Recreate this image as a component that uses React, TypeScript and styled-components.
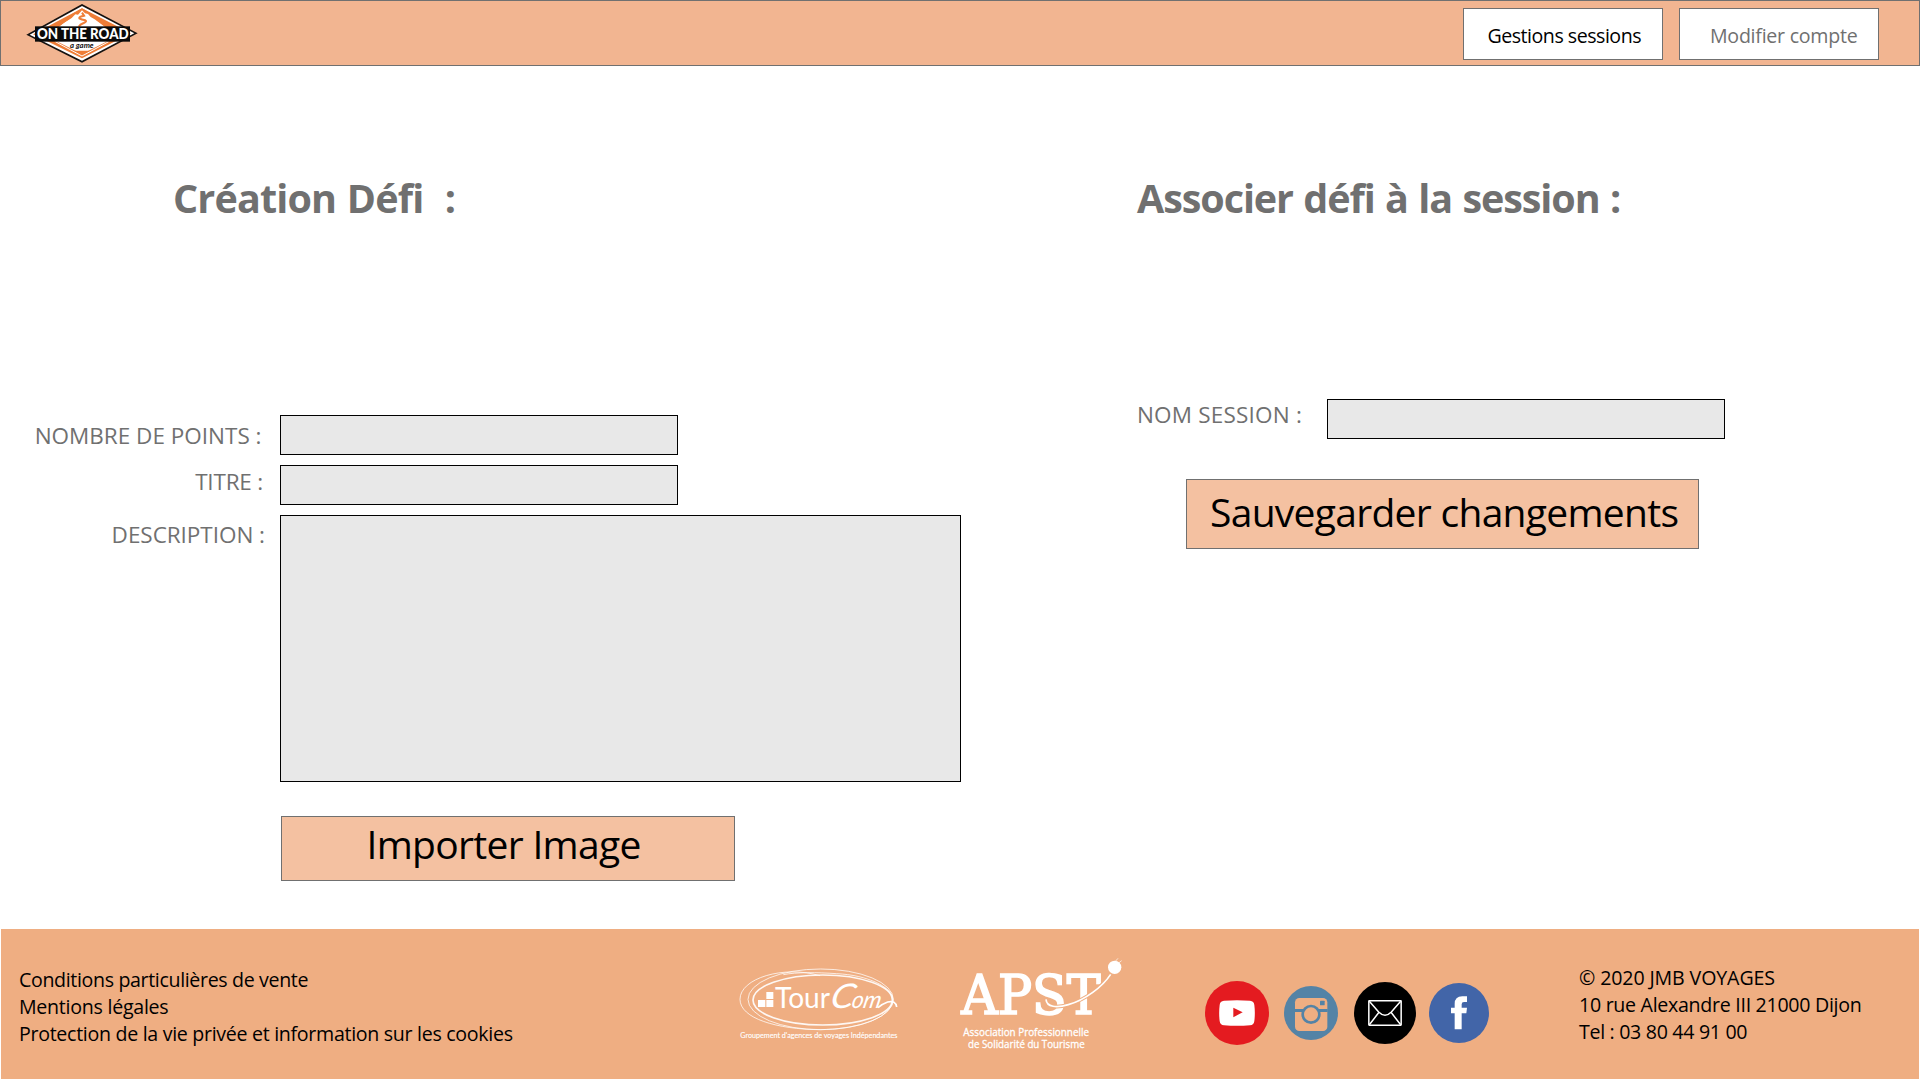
import React from "react";
import styled, { createGlobalStyle } from "styled-components";

const GlobalStyle = createGlobalStyle`
  *, *::before, *::after { box-sizing: border-box; }
  body {
    margin: 0;
    background: #ffffff;
    font-family: "Open Sans", "Noto Sans", sans-serif;
    color: #000000;
  }
`;

const Page = styled.div`
  width: 1920px;
  height: 1080px;
  display: flex;
  flex-direction: column;
  overflow: hidden;
`;

const Header = styled.header`
  height: 66px;
  flex: none;
  display: flex;
  justify-content: space-between;
  align-items: flex-start;
  background: #f2b591;
  border: 1px solid #707070;
`;

const BrandLogo = styled.svg`
  display: block;
  width: 139px;
  height: 64px;
`;

const Nav = styled.nav`
  display: flex;
  gap: 16px;
  padding: 7px 40px 0 0;
`;

const NavButton = styled.button<{ $indent: number; $muted?: boolean; $track: number }>`
  width: 200px;
  height: 52px;
  padding: 2px 0 0 ${(p) => p.$indent}px;
  border: 1px solid #707070;
  background: #ffffff;
  color: ${(p) => (p.$muted ? "#707070" : "#000000")};
  font-family: inherit;
  font-size: 19.6px;
  letter-spacing: ${(p) => p.$track}px;
  text-align: left;
  white-space: nowrap;
`;

const Main = styled.main`
  flex: 1;
  display: flex;
  align-items: flex-start;
`;

const Section = styled.section<{ $width: number }>`
  width: ${(p) => p.$width}px;
  display: flex;
  flex-direction: column;
  padding-top: 105px;
`;

const Title = styled.h1<{ $indent: number; $space: number; $track: number }>`
  margin: 0 0 ${(p) => p.$space}px ${(p) => p.$indent}px;
  font-size: 39.5px;
  font-weight: 700;
  line-height: 54px;
  letter-spacing: ${(p) => p.$track}px;
  word-spacing: 1.2px;
  color: #707070;
  white-space: pre;
`;

const Row = styled.div`
  display: flex;
  align-items: flex-start;
  margin-bottom: 10px;
`;

const Label = styled.label<{ $width: number; $drop: number; $gap: number; $track: number }>`
  width: ${(p) => p.$width}px;
  padding: ${(p) => p.$drop}px ${(p) => p.$gap}px 0 0;
  font-size: 22.5px;
  line-height: 30px;
  letter-spacing: ${(p) => p.$track}px;
  text-align: right;
  white-space: nowrap;
  color: #707070;
`;

const Input = styled.input`
  width: 398px;
  height: 40px;
  border: 1px solid #000000;
  border-radius: 0;
  background: #e8e8e8;
`;

const TextArea = styled.textarea`
  display: block;
  width: 681px;
  height: 267px;
  border: 1px solid #000000;
  border-radius: 0;
  background: #e8e8e8;
  resize: none;
`;

const ActionButton = styled.button<{
  $width: number;
  $height: number;
  $margin: string;
  $indent: number;
  $lift: number;
  $track: number;
}>`
  width: ${(p) => p.$width}px;
  height: ${(p) => p.$height}px;
  margin: ${(p) => p.$margin};
  padding: 0 0 ${(p) => p.$lift}px ${(p) => p.$indent}px;
  border: 1px solid #707070;
  background: #f4c1a1;
  color: #000000;
  font-family: inherit;
  font-size: 39px;
  line-height: 54px;
  letter-spacing: ${(p) => p.$track}px;
  text-align: left;
  white-space: nowrap;
`;

const Footer = styled.footer`
  flex: none;
  height: 150px;
  margin: 0 1px 1px;
  display: flex;
  align-items: flex-start;
  background: #efae82;
`;

const TextBlock = styled.div<{ $width: number; $top: number; $left: number }>`
  width: ${(p) => p.$width}px;
  padding: ${(p) => p.$top}px 0 0 ${(p) => p.$left}px;
`;

const FooterLine = styled.p<{ $track: number }>`
  margin: 0;
  font-size: 19.6px;
  line-height: 27px;
  letter-spacing: ${(p) => p.$track}px;
  white-space: nowrap;
`;

const PartnerLogo = styled.svg`
  display: block;
  flex: none;
  width: 200px;
  height: 120px;
  margin: 11px 20px 0 0;
`;

const Socials = styled.div`
  width: 374px;
  margin: 52px 0 0 45px;
  height: 64px;
  display: flex;
  align-items: center;
  flex: none;
`;

const SocialIcon = styled.svg<{ $size: number; $gap: number }>`
  display: block;
  flex: none;
  width: ${(p) => p.$size}px;
  height: ${(p) => p.$size}px;
  margin-right: ${(p) => p.$gap}px;
`;

const OnTheRoad = () => (
  <BrandLogo viewBox="3 3 417 192">
    <polygon points="79,104 246,12 413,100 246,188" fill="#15110f" />
    <polygon points="89,104 246,18 403,100 246,182" fill="#ffffff" />
    <polygon points="99,103 246,25 393,100 246,175" fill="#ee7d37" />
    <polygon points="128,103 246,40 364,103 246,162" fill="#ffffff" />
    <polygon points="150,82 246,25 342,82 314,82 281,57 270,48 262,42 256,36 246,31 236,43 228,42 215,54 196,66 176,82" fill="#ee7d37" />
    <polygon points="176,82 196,67 215,54 226,43 234,44 246,31 255,40 264,42 272,51 284,58 316,82" fill="#ffffff" />
    <path d="M246 38 L252 47 Q236 50 238 55 Q244 59 256 61 Q262 64 251 69 Q240 73 236 80" fill="none" stroke="#ee7d37" strokeWidth="6" />
    <polygon points="216,152 276,152 246,168" fill="#ee7d37" />
    <path d="M166 125 L246 168 L326 125" fill="none" stroke="#ffffff" strokeWidth="3" />
    <rect x="105" y="79" width="285" height="46" fill="#0a0a0a" />
    <text x="111" y="117" fontFamily="Lato, sans-serif" fontWeight="900" fontSize="43" fill="#ffffff" textLength="275" lengthAdjust="spacingAndGlyphs">
      ON THE ROAD
    </text>
    <text x="210" y="144" fontFamily="Lato, sans-serif" fontStyle="italic" fontWeight="700" fontSize="24" fill="#15110f" textLength="71" lengthAdjust="spacingAndGlyphs">
      a game
    </text>
  </BrandLogo>
);

const TourCom = () => (
  <PartnerLogo viewBox="0 0 600 360">
    <g fill="none" stroke="#ffffff">
      <ellipse cx="308" cy="180" rx="209" ry="75" strokeWidth="5" opacity="0.9" />
      <ellipse cx="302" cy="178" rx="218" ry="91" strokeWidth="3" opacity="0.75" />
      <path d="M300 107 C190 75 60 115 60 178 C60 235 170 268 300 269 C400 268 510 240 519 182 C520 140 440 105 350 101 C290 97 230 96 190 104" strokeWidth="3" opacity="0.75" />
    </g>
    <g fill="#ffffff">
      <rect x="139" y="156" width="21" height="21" />
      <rect x="114" y="180" width="22" height="21" />
      <rect x="139" y="180" width="21" height="21" />
    </g>
    <text x="165" y="203" fontFamily="Lato, sans-serif" fontSize="88" fill="#ffffff" textLength="165" lengthAdjust="spacingAndGlyphs">
      Tour
    </text>
    <g fill="#ffffff" fontFamily="Lato, sans-serif" fontStyle="italic">
      <text transform="translate(326 204) skewX(-14)" fontSize="102" textLength="70" lengthAdjust="spacingAndGlyphs">
        C
      </text>
      <text transform="translate(392 204) skewX(-12)" fontSize="72" textLength="88" lengthAdjust="spacingAndGlyphs">
        om
      </text>
    </g>
    <path d="M474 203 Q486 192 503 186 Q527 180 530 201" fill="none" stroke="#ffffff" strokeWidth="5" />
    <text x="61" y="295" fontFamily="Lato, sans-serif" fontSize="24" fill="#ffffff" stroke="#ffffff" strokeWidth="0.4" textLength="471" lengthAdjust="spacingAndGlyphs">
      Groupement d'agences de voyages Indépendantes
    </text>
  </PartnerLogo>
);

const Apst = () => (
  <PartnerLogo viewBox="0 0 600 360">
    <text x="64" y="222" fontFamily="'DejaVu Serif Condensed', 'DejaVu Serif', serif" fontSize="164" fill="#ffffff" stroke="#ffffff" strokeWidth="5" textLength="418" lengthAdjust="spacingAndGlyphs">
      APST
    </text>
    <path d="M318 178 C320 202 350 204 385 194 C435 180 488 140 512 103" fill="none" stroke="#efae82" strokeWidth="11" />
    <path d="M318 178 C320 202 350 204 385 194 C435 180 488 140 512 103" fill="none" stroke="#ffffff" strokeWidth="5" />
    <circle cx="524" cy="82" r="20" fill="#ffffff" />
    <path d="M527 63 L534 55 M536 69 L545 62" stroke="#ffffff" strokeWidth="3" opacity="0.7" />
    <g fontFamily="'Open Sans', sans-serif" fontSize="31" fill="#ffffff" stroke="#ffffff" strokeWidth="0.9">
      <text x="70" y="289" textLength="377" lengthAdjust="spacingAndGlyphs">Association Professionnelle</text>
      <text x="84" y="323" textLength="350" lengthAdjust="spacingAndGlyphs">de Solidarité du Tourisme</text>
    </g>
  </PartnerLogo>
);

const YouTubeIcon = () => (
  <SocialIcon $size={64} $gap={15} viewBox="45 63 192 192">
    <circle cx="141" cy="159" r="96" fill="#e41b20" />
    <path d="M102 122 Q141 119 180 122 Q192 123 193 135 Q196 159 193 183 Q192 195 180 196 Q141 199 102 196 Q90 195 89 183 Q86 159 89 135 Q90 123 102 122Z" fill="#ffffff" />
    <path d="M130 143 L158 157 L130 172Z" fill="#e41b20" />
  </SocialIcon>
);

const InstagramIcon = () => (
  <SocialIcon $size={54} $gap={16} viewBox="282 78 162 162">
    <circle cx="363" cy="159" r="81" fill="#5483a6" />
    <rect x="315" y="114" width="97" height="99" rx="13" fill="#efae82" />
    <rect x="314" y="147" width="99" height="9" fill="#5483a6" />
    <circle cx="363" cy="163" r="25" fill="#efae82" stroke="#5483a6" strokeWidth="8" />
    <rect x="390" y="122" width="14" height="14" rx="2" fill="#5483a6" />
  </SocialIcon>
);

const MailIcon = () => (
  <SocialIcon $size={62} $gap={13} viewBox="492 66 186 186">
    <circle cx="585" cy="159" r="93" fill="#000000" />
    <g fill="none" stroke="#ffffff" strokeWidth="4.5" strokeLinejoin="round">
      <rect x="536.5" y="122.5" width="97" height="73" rx="1" />
      <path d="M538 124 L566 156 Q576 166 585 166 Q594 166 604 156 L632 124" />
      <path d="M538 194 L567 157 M632 194 L603 157" />
    </g>
  </SocialIcon>
);

const FacebookIcon = () => (
  <SocialIcon $size={60} $gap={0} viewBox="717 69 180 180">
    <circle cx="807" cy="159" r="90" fill="#4265a8" />
    <path d="M794 208 V160 H783 V143 H794 V132 Q794 109 817 109 H831 V126 H822 Q815 126 815 133 V143 H831 L829 160 H815 V208Z" fill="#ffffff" />
  </SocialIcon>
);

export default function App() {
  return (
    <Page>
      <GlobalStyle />
      <Header>
        <OnTheRoad />
        <Nav>
          <NavButton $indent={23.5} $track={-0.49}>Gestions sessions</NavButton>
          <NavButton $indent={30} $track={-0.26} $muted>Modifier compte</NavButton>
        </Nav>
      </Header>
      <Main>
        <Section $width={1080}>
          <Title $indent={173} $space={190} $track={-0.84}>{"Création Défi  :"}</Title>
          <Row>
            <Label htmlFor="points" $width={280} $drop={6} $gap={18.5} $track={0}>NOMBRE DE POINTS :</Label>
            <Input id="points" />
          </Row>
          <Row>
            <Label htmlFor="titre" $width={280} $drop={2} $gap={17} $track={-0.2}>TITRE :</Label>
            <Input id="titre" />
          </Row>
          <Row>
            <Label htmlFor="description" $width={280} $drop={5} $gap={15} $track={-0.04}>DESCRIPTION :</Label>
            <TextArea id="description" />
          </Row>
          <ActionButton $width={454} $height={65} $margin="24px 0 0 281px" $indent={84.5} $lift={9} $track={-0.69}>
            Importer Image
          </ActionButton>
        </Section>
        <Section $width={840}>
          <Title $indent={57} $space={174} $track={-1.08}>Associer défi à la session :</Title>
          <Row>
            <Label htmlFor="session" $width={247} $drop={1} $gap={25} $track={0.2}>NOM SESSION :</Label>
            <Input id="session" />
          </Row>
          <ActionButton $width={513} $height={70} $margin="30px 0 0 106px" $indent={23} $lift={5} $track={-0.71}>
            Sauvegarder changements
          </ActionButton>
        </Section>
      </Main>
      <Footer>
        <TextBlock $width={719} $top={37} $left={18}>
          <FooterLine $track={-0.35}>Conditions particulières de vente</FooterLine>
          <FooterLine $track={-0.26}>Mentions légales</FooterLine>
          <FooterLine $track={-0.3}>Protection de la vie privée et information sur les cookies</FooterLine>
        </TextBlock>
        <TourCom />
        <Apst />
        <Socials>
          <YouTubeIcon />
          <InstagramIcon />
          <MailIcon />
          <FacebookIcon />
        </Socials>
        <TextBlock $width={330} $top={35} $left={0}>
          <FooterLine $track={-0.12}>© 2020 JMB VOYAGES</FooterLine>
          <FooterLine $track={-0.29}>10 rue Alexandre III 21000 Dijon</FooterLine>
          <FooterLine $track={-0.31}>Tel : 03 80 44 91 00</FooterLine>
        </TextBlock>
      </Footer>
    </Page>
  );
}
